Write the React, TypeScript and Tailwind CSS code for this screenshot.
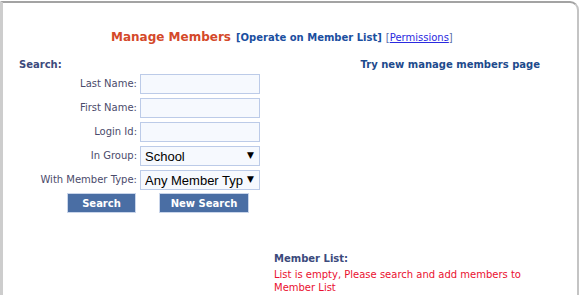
import React from "react";

const font = { fontFamily: '"DejaVu Sans", Verdana, sans-serif' };

function TextRow({ label }: { label: string }) {
  return (
    <>
      <label className="text-right text-[10px] leading-[20px] text-[#4b4b6b]">{label}</label>
      <input
        type="text"
        className="h-[20px] w-[120px] border border-[#bccbe8] bg-[#f6f9fe] outline-none"
      />
    </>
  );
}

function SelectRow({ label, value }: { label: string; value: string }) {
  return (
    <>
      <label className="text-right text-[10px] leading-[20px] text-[#4b4b6b]">{label}</label>
      <div className="flex h-[20px] w-[120px] items-center border border-[#bccbe8] bg-[#f6f9fe] pl-[4px]">
        <div className="w-[98px] overflow-hidden">
          <span
            className="whitespace-nowrap text-[13px] leading-none text-black"
            style={{ fontFamily: '"Liberation Sans", Arial, sans-serif' }}
          >
            {value}
          </span>
        </div>
        <span className="flex h-full w-[15px] items-center justify-center text-[9px] text-black">▼</span>
      </div>
    </>
  );
}

export default function App() {
  return (
    <div className="h-[295px] w-[579px] overflow-hidden bg-white" style={font}>
      <div className="mt-px h-[300px] rounded-tr-[9px] border-l-[3px] border-r-2 border-t-2 border-l-[#cdcdcd] border-r-[#c4c4c4] border-t-[#a3a3a3]">
        {/* heading */}
        <div className="flex items-baseline pl-[108px] pt-[25px]">
          <h1 className="text-[12px] font-bold text-[#d4492a]">Manage Members</h1>
          <span className="ml-[5px] text-[10px] font-bold text-[#1b4fa0]">[Operate on Member List]</span>
          <span className="ml-[4px] text-[10px] text-[#5a6ea8]">
            [<a href="#" className="text-[#2a2ae0] underline">Permissions</a>]
          </span>
        </div>

        {/* search header */}
        <div className="mt-[11px] flex justify-between pl-[16px] pr-[37px] text-[10px] font-bold">
          <span className="text-[#3c4a7c]">Search:</span>
          <span className="text-[#1d4a8c]">Try new manage members page</span>
        </div>

        {/* form */}
        <div className="mt-[2px] grid grid-cols-[134px_120px] gap-x-[3px] gap-y-[4px]">
          <TextRow label="Last Name:" />
          <TextRow label="First Name:" />
          <TextRow label="Login Id:" />
          <SelectRow label="In Group:" value="School" />
          <SelectRow label="With Member Type:" value="Any Member Type" />
        </div>

        <div className="mt-[3px] flex pl-[64px]">
          <button className="h-[20px] w-[69px] border border-[#c9d5ea] bg-[#4a6ea4] text-[10px] font-bold text-white">
            Search
          </button>
          <button className="ml-[23px] h-[20px] w-[90px] border border-[#c9d5ea] bg-[#4a6ea4] text-[10px] font-bold text-white">
            New Search
          </button>
        </div>

        {/* member list */}
        <div className="mt-[38px] pl-[271px] text-[10px]">
          <div className="font-bold text-[#3c4a7c]">Member List:</div>
          <p className="mt-[2px] w-[260px] leading-[13px] text-[#ea1030]">
            List is empty, Please search and add members to Member List
          </p>
        </div>
      </div>
    </div>
  );
}
